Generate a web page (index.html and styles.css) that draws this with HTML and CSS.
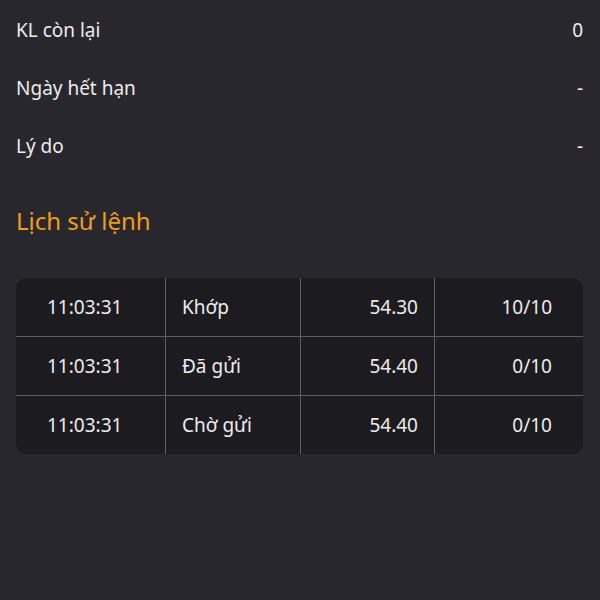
FILE: index.html
```html
<!DOCTYPE html>
<html lang="vi">
<head>
    <meta charset="UTF-8">
    <meta name="viewport" content="width=device-width, initial-scale=1.0">
    <title>Chi tiết lệnh</title>
    <link rel="stylesheet" href="styles.css">
</head>
<body>
    <div class="info">
        <div class="info-row">
            <span>KL còn lại</span>
            <span>0</span>
        </div>
        <div class="info-row">
            <span>Ngày hết hạn</span>
            <span>-</span>
        </div>
        <div class="info-row">
            <span>Lý do</span>
            <span>-</span>
        </div>
    </div>

    <h2 class="title">Lịch sử lệnh</h2>

    <div class="history">
        <div class="history-row">
            <div class="cell time">11:03:31</div>
            <div class="cell status">Khớp</div>
            <div class="cell price">54.30</div>
            <div class="cell qty">10/10</div>
        </div>
        <div class="history-row">
            <div class="cell time">11:03:31</div>
            <div class="cell status">Đã gửi</div>
            <div class="cell price">54.40</div>
            <div class="cell qty">0/10</div>
        </div>
        <div class="history-row">
            <div class="cell time">11:03:31</div>
            <div class="cell status">Chờ gửi</div>
            <div class="cell price">54.40</div>
            <div class="cell qty">0/10</div>
        </div>
    </div>
</body>
</html>
```

FILE: styles.css
```css
body {
    margin: 0;
    padding: 0 17px 0 16px;
    background-color: #28272d;
    color: #ececee;
    font-family: "Noto Sans", "Open Sans", sans-serif;
    font-size: 19px;
}
.info-row {
    display: flex;
    justify-content: space-between;
    align-items: center;
    height: 58px;
}
.info-row:first-child {
    margin-top: 1px;
}
.title {
    margin: 18px 0 0;
    height: 56px;
    line-height: 56px;
    font-size: 24px;
    font-weight: normal;
    color: #f29b1a;
}
.history {
    margin-top: 29px;
    background-color: #1c1b20;
    border-radius: 10px;
    overflow: hidden;
}
.history-row {
    display: grid;
    grid-template-columns: 149px 135px 134px 1fr;
    height: 58px;
}
.history-row + .history-row {
    border-top: 1px solid #5c5c61;
}
.cell {
    display: flex;
    align-items: center;
}
.cell + .cell {
    border-left: 1px solid #5c5c61;
}
.time {
    padding-left: 31px;
}
.status {
    padding-left: 16px;
}
.price {
    justify-content: flex-end;
    padding-right: 16px;
}
.qty {
    justify-content: flex-end;
    padding-right: 31px;
}
```
